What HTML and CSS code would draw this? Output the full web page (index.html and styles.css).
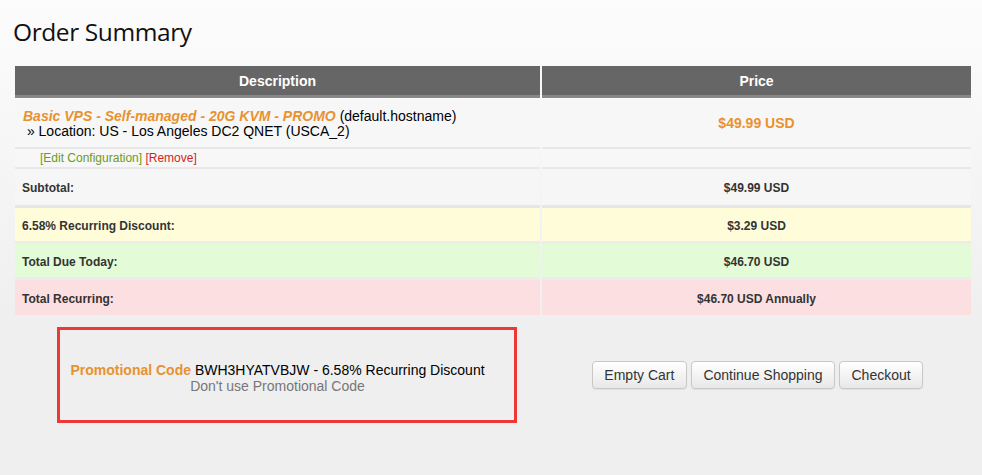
FILE: index.html
```html
<!DOCTYPE html>
<html>
<head>
<meta charset="utf-8">
<title>Order Summary</title>
<link rel="stylesheet" href="styles.css">
</head>
<body>
<div class="page">
  <h1 class="title">Order Summary</h1>
  <table class="cart">
    <thead>
      <tr>
        <th class="col-desc">Description</th>
        <th class="col-price">Price</th>
      </tr>
    </thead>
    <tbody>
      <tr class="product">
        <td class="desc"><span class="pname">Basic VPS - Self-managed - 20G KVM - PROMO</span> (default.hostname)<br>&nbsp;» Location: US - Los Angeles DC2 QNET (USCA_2)</td>
        <td class="price"><span class="pprice">$49.99 USD</span></td>
      </tr>
      <tr class="actions">
        <td class="links"><span class="edit">[Edit Configuration]</span> <span class="remove">[Remove]</span></td>
        <td></td>
      </tr>
      <tr class="sum subtotal">
        <td>Subtotal:</td>
        <td class="amt">$49.99 USD</td>
      </tr>
      <tr class="sum discount">
        <td>6.58% Recurring Discount:</td>
        <td class="amt">$3.29 USD</td>
      </tr>
      <tr class="sum due">
        <td>Total Due Today:</td>
        <td class="amt">$46.70 USD</td>
      </tr>
      <tr class="sum recurring">
        <td>Total Recurring:</td>
        <td class="amt">$46.70 USD Annually</td>
      </tr>
    </tbody>
  </table>
  <div class="bottom">
    <div class="promo">
      <div class="promo-line"><span class="promo-label">Promotional Code</span> BWH3HYATVBJW - 6.58% Recurring Discount</div>
      <div class="promo-remove">Don't use Promotional Code</div>
      <div class="highlight"></div>
    </div>
    <div class="buttons">
      <button class="btn">Empty Cart</button>
      <button class="btn">Continue Shopping</button>
      <button class="btn">Checkout</button>
    </div>
  </div>
</div>
</body>
</html>
```
FILE: styles.css
```css
html, body {
  margin: 0;
  padding: 0;
}
body {
  width: 982px;
  height: 475px;
  overflow: hidden;
  background: linear-gradient(to bottom, #fcfcfc 0px, #f6f6f6 150px, #efefef 320px, #efefef 475px);
  font-family: "Liberation Sans", Arial, sans-serif;
  color: #000;
}
.page {
  padding: 0 0 0 13px;
  width: 960px;
}
.title {
  margin: 0;
  padding-top: 15px;
  height: 50px;
  font-family: "Open Sans", sans-serif;
  font-weight: 400;
  font-size: 24.5px;
  line-height: 34px;
  letter-spacing: -0.4px;
  color: #111;
}
.cart {
  width: 960px;
  border-collapse: separate;
  border-spacing: 2px 0;
  margin-top: 1px;
  font-size: 14px;
}
.cart th {
  background: #666;
  color: #fff;
  font-weight: bold;
  font-size: 14px;
  height: 29px;
  padding: 0;
  border-bottom: 3px solid #888;
  text-align: center;
}
.col-desc { width: 525px; }
.cart td {
  background: #f7f7f7;
  border-bottom: 2px solid #e8e8e8;
  padding: 0;
}
.product td {
  height: 47px;
  border-top: 1px solid #fbfbfb;
}
.desc {
  padding-left: 8px !important;
  padding-top: 1px !important;
  line-height: 15px;
}
.pname {
  color: #e8922f;
  font-weight: bold;
  font-style: italic;
}
.price {
  text-align: center;
}
.pprice {
  color: #e8922f;
  font-weight: bold;
}
.actions td {
  height: 18px;
  font-size: 12px;
}
.links {
  padding-left: 25px !important;
}
.edit { color: #6b9a1e; }
.remove { color: #d21f1f; }
.sum td {
  font-size: 12px;
  font-weight: bold;
  color: #333;
  padding-left: 7px;
  padding-top: 2px;
}
.sum td.amt {
  text-align: center;
  padding-left: 0;
}
.subtotal td { background: #f6f6f6; border-bottom: 3px solid #e6e6e6; height: 34px; }
.discount td { background: #fffdd9; border-bottom: 3px solid #ececec; height: 31px; }
.due td { background: #e4fbd8; border-bottom: 3px solid #ececec; height: 31px; }
.recurring td { background: #fcdfe1; border-bottom: 0; height: 33px; }
.bottom {
  display: flex;
  width: 960px;
  margin-top: 0;
}
.promo {
  position: relative;
  width: 529px;
  text-align: center;
  font-size: 14px;
  padding-top: 47px;
  line-height: 16px;
}
.promo-label {
  color: #e8922f;
  font-weight: bold;
}
.promo-remove {
  color: #777;
}
.highlight {
  position: absolute;
  left: 44px;
  top: 12px;
  width: 454px;
  height: 90px;
  border: 3px solid #ec3936;
}
.buttons {
  flex: 1;
  display: flex;
  justify-content: center;
  gap: 4px;
  padding-top: 46px;
  padding-left: 0;
}
.btn {
  font-family: "Liberation Sans", Arial, sans-serif;
  font-size: 14px;
  color: #333;
  height: 28px;
  padding: 0 11.5px;
  border: 1px solid #c8c8c8;
  border-radius: 4px;
  background: linear-gradient(to bottom, #ffffff, #e8e8e8);
  box-shadow: 0 1px 1px rgba(0,0,0,0.06);
}
```
